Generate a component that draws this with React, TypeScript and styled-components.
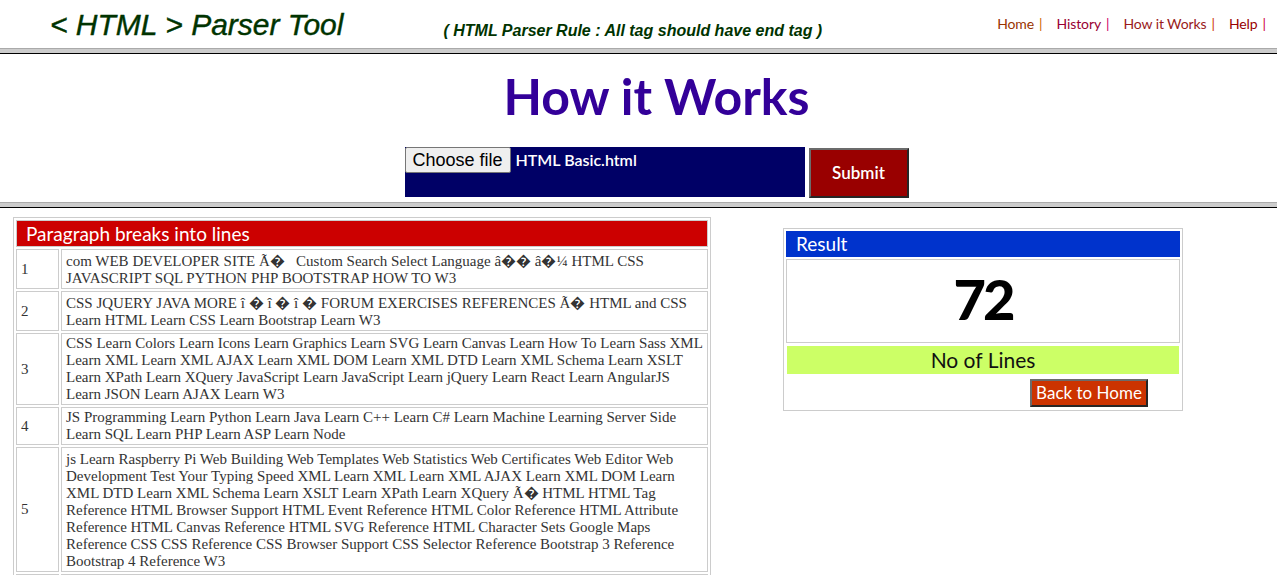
import React from "react";
import styled, { createGlobalStyle } from "styled-components";

const GlobalStyle = createGlobalStyle`
  html, body { margin: 0; padding: 0; background: #fff; overflow: hidden; }
  body { font-family: "Lato", "Open Sans", sans-serif; }
  * { box-sizing: border-box; }
`;

const Page = styled.div`
  width: 1277px;
  height: 575px;
  overflow: hidden;
`;

const Header = styled.header`
  display: flex;
  align-items: flex-start;
  height: 48px;
  padding: 0 11px 0 50px;
`;

const Title = styled.h1`
  margin: 8px 0 0 0;
  font-family: "Liberation Sans", Arial, sans-serif;
  font-style: italic;
  font-weight: normal;
  font-size: 30px;
  line-height: 34px;
  color: #003300;
  white-space: nowrap;
  -webkit-text-stroke: 0.4px #003300;
`;

const Rule = styled.div`
  margin: 22px 0 0 100px;
  font-family: "Liberation Sans", Arial, sans-serif;
  font-style: italic;
  font-weight: bold;
  font-size: 16px;
  line-height: 18px;
  color: #003300;
  white-space: nowrap;
`;

const Nav = styled.nav`
  margin: 15px 0 0 auto;
  display: flex;
  font-size: 14px;
  line-height: 18px;
  letter-spacing: -0.1px;
  white-space: nowrap;
`;

const NavLink = styled.a<{ $c: string }>`
  color: ${(p) => p.$c};
  text-decoration: none;
`;

const Pipe = styled.span<{ $c: string; $last?: boolean }>`
  color: ${(p) => p.$c};
  margin: 0 ${(p) => (p.$last ? 0 : 14)}px 0 5px;
`;

const Separator = styled.div<{ $mt: number }>`
  margin-top: ${(p) => p.$mt}px;
  height: 6px;
  background: #cccccc;
  border-top: 1px solid #aaaaaa;
  border-bottom: 1px solid #000000;
`;

const Heading = styled.h2`
  margin: 12px 0 0 0;
  padding-left: 36px;
  text-align: center;
  font-weight: 700;
  font-size: 50px;
  line-height: 60px;
  color: #330099;
`;

const FileRow = styled.form`
  margin-top: 21px;
  padding-left: 36px;
  display: flex;
  justify-content: center;
  align-items: flex-start;
  gap: 4px;
`;

const FileBox = styled.label`
  width: 400px;
  height: 50px;
  background: #000066;
  display: flex;
  align-items: flex-start;
  color: #fff;
  font-size: 17px;
  cursor: pointer;
`;

const HiddenInput = styled.input`
  display: none;
`;

const ChooseBtn = styled.span`
  height: 26px;
  padding: 0 7px;
  background: #efefef;
  border: 1px solid #767676;
  border-radius: 2px;
  font-family: "Liberation Sans", Arial, sans-serif;
  font-size: 18px;
  line-height: 24px;
  color: #000;
`;

const FileName = styled.span`
  margin-left: 5px;
  line-height: 26px;
  font-weight: 600;
  font-size: 16px;
`;

const SubmitBtn = styled.button`
  margin-top: 1px;
  width: 100px;
  height: 50px;
  background: #990000;
  color: #fff;
  border: 2px solid;
  border-color: #6b6b6b #262626 #262626 #6b6b6b;
  font-family: "Lato", sans-serif;
  font-size: 17px;
  font-weight: 600;
  padding: 0 0 2px 0;
`;

const Content = styled.main`
  margin-top: 9px;
  padding-left: 13px;
  display: flex;
  align-items: flex-start;
`;

const LinesTable = styled.table`
  width: 698px;
  border: 1px solid #cccccc;
  border-collapse: separate;
  border-spacing: 2px;
  table-layout: fixed;
  font-family: "Liberation Serif", "Times New Roman", serif;
  font-size: 15px;
  line-height: 17px;
  color: #333;
`;

const HeadCell = styled.th`
  border: 1px solid #cccccc;
  background: #cc0000;
  color: #fff;
  font-family: "Lato", sans-serif;
  font-weight: normal;
  font-size: 19px;
  line-height: 25px;
  text-align: left;
  padding: 0 9px;
`;

const NumCell = styled.td`
  border: 1px solid #cccccc;
  padding: 1px 4px;
  vertical-align: middle;
`;

const TextCell = styled.td<{ $tall?: boolean }>`
  border: 1px solid #cccccc;
  padding: ${(p) => (p.$tall ? "3px 4px 1px" : "1px 4px")};
  vertical-align: middle;
`;

const ResultBox = styled.section`
  margin: 11px 0 0 72px;
  width: 400px;
  border: 1px solid #cccccc;
  padding: 2px 2px 3px 2px;
  display: flex;
  flex-direction: column;
`;

const ResultHead = styled.div`
  height: 26px;
  background: #0033cc;
  color: #fff;
  font-size: 19px;
  line-height: 26px;
  padding-left: 10px;
`;

const CountCell = styled.div`
  margin-top: 2px;
  height: 84px;
  border: 1px solid #cccccc;
  display: flex;
  align-items: center;
  justify-content: center;
  font-weight: 900;
  font-size: 56px;
  letter-spacing: -3px;
  color: #000;
  padding-bottom: 6px;
`;

const LinesLabel = styled.div`
  margin: 3px 1px 0 1px;
  height: 28px;
  background: #ccff66;
  text-align: center;
  font-size: 21px;
  line-height: 28px;
  color: #111;
`;

const HomeBtn = styled.button`
  margin: 5px 0 0 244px;
  width: 118px;
  height: 28px;
  background: #cc3300;
  color: #fff;
  border: 2px solid;
  border-color: #6b6b6b #262626 #262626 #6b6b6b;
  font-family: "Lato", sans-serif;
  font-size: 17px;
  line-height: 22px;
  padding: 0;
`;

const rows: string[] = [
  "com WEB DEVELOPER SITE Ã\uFFFD \u00A0 Custom Search Select Language â\uFFFD\uFFFD â\uFFFD¼ HTML CSS JAVASCRIPT SQL PYTHON PHP BOOTSTRAP HOW TO W3",
  "CSS JQUERY JAVA MORE î \uFFFD î \uFFFD î \uFFFD FORUM EXERCISES REFERENCES Ã\uFFFD HTML and CSS Learn HTML Learn CSS Learn Bootstrap Learn W3",
  "CSS Learn Colors Learn Icons Learn Graphics Learn SVG Learn Canvas Learn How To Learn Sass XML Learn XML Learn XML AJAX Learn XML DOM Learn XML DTD Learn XML Schema Learn XSLT Learn XPath Learn XQuery JavaScript Learn JavaScript Learn jQuery Learn React Learn AngularJS Learn JSON Learn AJAX Learn W3",
  "JS Programming Learn Python Learn Java Learn C++ Learn C# Learn Machine Learning Server Side Learn SQL Learn PHP Learn ASP Learn Node",
  "js Learn Raspberry Pi Web Building Web Templates Web Statistics Web Certificates Web Editor Web Development Test Your Typing Speed XML Learn XML Learn XML AJAX Learn XML DOM Learn XML DTD Learn XML Schema Learn XSLT Learn XPath Learn XQuery Ã\uFFFD HTML HTML Tag Reference HTML Browser Support HTML Event Reference HTML Color Reference HTML Attribute Reference HTML Canvas Reference HTML SVG Reference HTML Character Sets Google Maps Reference CSS CSS Reference CSS Browser Support CSS Selector Reference Bootstrap 3 Reference Bootstrap 4 Reference W3",
  "JavaScript JavaScript Reference JavaScript HTML DOM Reference jQuery Reference AngularJS Reference Python Python Reference Java Reference SQL SQL Reference PHP Reference",
];

const navItems = [
  { label: "Home", c: "#993300", pc: "#cc6600" },
  { label: "History", c: "#990033", pc: "#cc0066" },
  { label: "How it Works", c: "#991a1a", pc: "#cc3300" },
  { label: "Help", c: "#990000", pc: "#cc0033" },
];

export default function App() {
  return (
    <Page>
      <GlobalStyle />
      <Header>
        <Title>&lt; HTML &gt; Parser Tool</Title>
        <Rule>( HTML Parser Rule : All tag should have end tag )</Rule>
        <Nav>
          {navItems.map((n, i) => (
            <React.Fragment key={n.label}>
              <NavLink href="#" $c={n.c}>
                {n.label}
              </NavLink>
              <Pipe $c={n.pc} $last={i === navItems.length - 1}>
                |
              </Pipe>
            </React.Fragment>
          ))}
        </Nav>
      </Header>
      <Separator $mt={0} />
      <Heading>How it Works</Heading>
      <FileRow onSubmit={(e) => e.preventDefault()}>
        <FileBox>
          <HiddenInput type="file" />
          <ChooseBtn>Choose file</ChooseBtn>
          <FileName>HTML Basic.html</FileName>
        </FileBox>
        <SubmitBtn type="submit">Submit</SubmitBtn>
      </FileRow>
      <Separator $mt={4} />
      <Content>
        <LinesTable>
          <colgroup>
            <col style={{ width: 43 }} />
            <col />
          </colgroup>
          <thead>
            <tr>
              <HeadCell colSpan={2}>Paragraph breaks into lines</HeadCell>
            </tr>
          </thead>
          <tbody>
            {rows.map((r, i) => (
              <tr key={i}>
                <NumCell>{i + 1}</NumCell>
                <TextCell $tall={r.includes("\uFFFD")}>{r}</TextCell>
              </tr>
            ))}
          </tbody>
        </LinesTable>
        <ResultBox>
          <ResultHead>Result</ResultHead>
          <CountCell>72</CountCell>
          <LinesLabel>No of Lines</LinesLabel>
          <HomeBtn type="button">Back to Home</HomeBtn>
        </ResultBox>
      </Content>
    </Page>
  );
}
